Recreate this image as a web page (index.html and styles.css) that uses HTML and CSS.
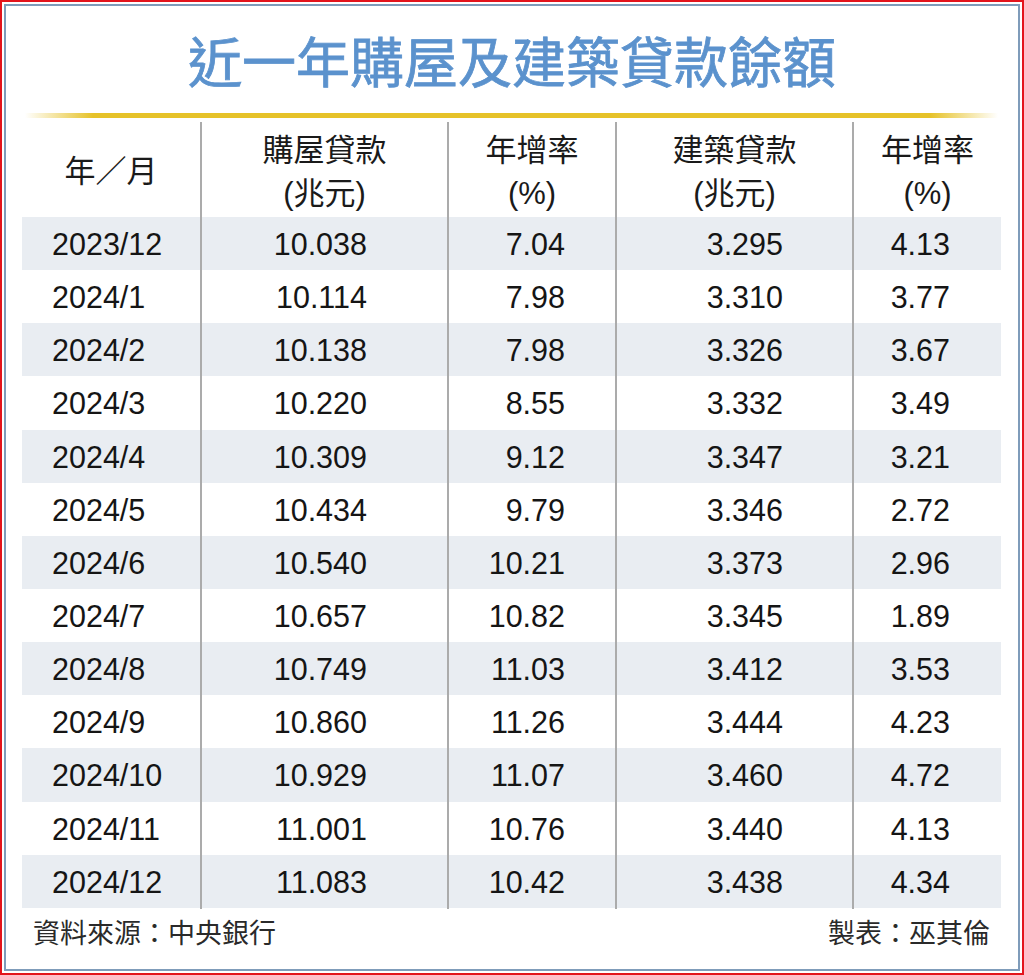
FILE: index.html
```html
<!DOCTYPE html>
<html lang="zh-Hant">
<head>
<meta charset="utf-8">
<title>近一年購屋及建築貸款餘額</title>
<link rel="stylesheet" href="styles.css">
</head>
<body>
<div class="frame">
  <div class="inner">
    <h1 class="title">近一年購屋及建築貸款餘額</h1>
    <div class="rule"></div>
    <div class="table">
      <div class="head">
        <div class="hc c1"><span>年／月</span></div>
        <div class="hc c2"><span>購屋貸款</span><span>(兆元)</span></div>
        <div class="hc c3"><span>年增率</span><span>(%)</span></div>
        <div class="hc c4"><span>建築貸款</span><span>(兆元)</span></div>
        <div class="hc c5"><span>年增率</span><span>(%)</span></div>
      </div>
      <div class="row"><div class="c c1">2023/12</div><div class="c c2">10.038</div><div class="c c3">7.04</div><div class="c c4">3.295</div><div class="c c5">4.13</div></div>
      <div class="row"><div class="c c1">2024/1</div><div class="c c2">10.114</div><div class="c c3">7.98</div><div class="c c4">3.310</div><div class="c c5">3.77</div></div>
      <div class="row"><div class="c c1">2024/2</div><div class="c c2">10.138</div><div class="c c3">7.98</div><div class="c c4">3.326</div><div class="c c5">3.67</div></div>
      <div class="row"><div class="c c1">2024/3</div><div class="c c2">10.220</div><div class="c c3">8.55</div><div class="c c4">3.332</div><div class="c c5">3.49</div></div>
      <div class="row"><div class="c c1">2024/4</div><div class="c c2">10.309</div><div class="c c3">9.12</div><div class="c c4">3.347</div><div class="c c5">3.21</div></div>
      <div class="row"><div class="c c1">2024/5</div><div class="c c2">10.434</div><div class="c c3">9.79</div><div class="c c4">3.346</div><div class="c c5">2.72</div></div>
      <div class="row"><div class="c c1">2024/6</div><div class="c c2">10.540</div><div class="c c3">10.21</div><div class="c c4">3.373</div><div class="c c5">2.96</div></div>
      <div class="row"><div class="c c1">2024/7</div><div class="c c2">10.657</div><div class="c c3">10.82</div><div class="c c4">3.345</div><div class="c c5">1.89</div></div>
      <div class="row"><div class="c c1">2024/8</div><div class="c c2">10.749</div><div class="c c3">11.03</div><div class="c c4">3.412</div><div class="c c5">3.53</div></div>
      <div class="row"><div class="c c1">2024/9</div><div class="c c2">10.860</div><div class="c c3">11.26</div><div class="c c4">3.444</div><div class="c c5">4.23</div></div>
      <div class="row"><div class="c c1">2024/10</div><div class="c c2">10.929</div><div class="c c3">11.07</div><div class="c c4">3.460</div><div class="c c5">4.72</div></div>
      <div class="row"><div class="c c1">2024/11</div><div class="c c2">11.001</div><div class="c c3">10.76</div><div class="c c4">3.440</div><div class="c c5">4.13</div></div>
      <div class="row"><div class="c c1">2024/12</div><div class="c c2">11.083</div><div class="c c3">10.42</div><div class="c c4">3.438</div><div class="c c5">4.34</div></div>
      <div class="foot">
        <span>資料來源：中央銀行</span>
        <span>製表：巫其倫</span>
      </div>
    </div>
  </div>
</div>
</body>
</html>
```
FILE: styles.css
```css
* { box-sizing: border-box; }
html, body { margin: 0; padding: 0; background: #ffffff; }
body {
  font-family: "Liberation Sans", "Noto Sans CJK TC", sans-serif;
  color: #151515;
}
.frame {
  width: 1024px;
  height: 975px;
  border: 2px solid #e3141c;
  padding: 2px;
  background: #ffffff;
}
.inner {
  height: 100%;
  border: 2px solid #7f9cba;
  padding-top: 24px;
}
.title {
  margin: 0;
  height: 60px;
  line-height: 60px;
  text-align: center;
  font-family: "Noto Sans CJK TC", sans-serif;
  font-size: 54px;
  font-weight: 400;
  -webkit-text-stroke: 0.8px #5b92cd;
  color: #5b92cd;
  letter-spacing: 0;
}
.rule {
  margin: 23px 0 0 19px;
  width: 973px;
  height: 5px;
  background: linear-gradient(to right,
    rgba(230, 192, 40, 0) 0%,
    #e6c229 7%,
    #e6c229 93%,
    rgba(230, 192, 40, 0) 100%);
}
.table {
  margin: 4px 0 0 16px;
  width: 979px;
}
.head, .row {
  display: grid;
  grid-template-columns: 178px 247px 168px 237px 149px;
}
.head { height: 95px; }
.row { height: 53.15px; }
.row:nth-of-type(2n) { background: #e9edf2; }
.hc {
  display: flex;
  flex-direction: column;
  justify-content: center;
  align-items: center;
  padding-top: 4px;
  font-size: 31px;
  line-height: 43px;
  color: #1a1a1a;
}
.c2, .c3, .c4, .c5 { border-left: 2px solid #ababab; }
.c {
  font-size: 30.5px;
  line-height: 53px;
  padding-top: 1px;
  text-align: right;
  white-space: nowrap;
}
.c.c1 { text-align: left; padding-left: 30px; }
.c.c2 { padding-right: 80px; }
.c.c3 { padding-right: 50px; }
.c.c4 { padding-right: 69px; }
.c.c5 { padding-right: 51px; }
.foot {
  display: flex;
  justify-content: space-between;
  padding: 0 11px;
  height: 48px;
  line-height: 48px;
  font-family: "Noto Sans CJK TC", sans-serif;
  font-size: 27px;
  color: #2a2a2a;
}
```
